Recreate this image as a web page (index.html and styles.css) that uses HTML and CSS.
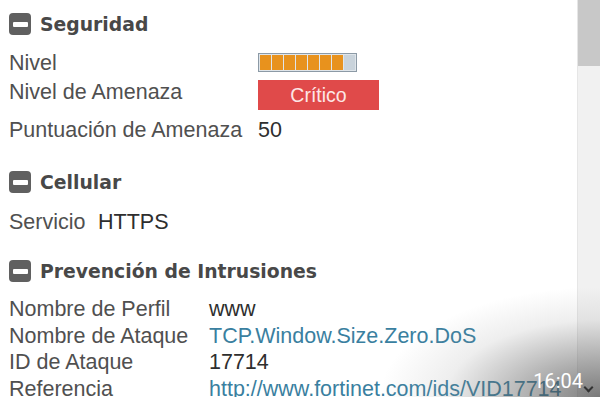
FILE: index.html
```html
<!DOCTYPE html>
<html lang="es">
<head>
<meta charset="utf-8">
<title>Detalles</title>
<link rel="stylesheet" href="styles.css">
</head>
<body>
<div class="frame">
  <main class="content">
    <section class="sec sec-seg">
      <h2 class="head"><span class="icon"></span>Seguridad</h2>
      <div class="kv kv-seg">
        <div class="lbl r1">Nivel</div>
        <div class="val r1"><div class="bar"><i class="on"></i><i class="on"></i><i class="on"></i><i class="on"></i><i class="on"></i><i class="on"></i><i class="on"></i><i></i></div></div>
        <div class="lbl r2">Nivel de Amenaza</div>
        <div class="val r2"><span class="badge">Crítico</span></div>
        <div class="lbl r3">Puntuación de Amenaza</div>
        <div class="val r3">50</div>
      </div>
    </section>
    <section class="sec sec-cell">
      <h2 class="head"><span class="icon"></span>Cellular</h2>
      <div class="kv kv-cell">
        <div class="lbl">Servicio</div>
        <div class="val">HTTPS</div>
      </div>
    </section>
    <section class="sec sec-ips">
      <h2 class="head"><span class="icon"></span>Prevención de Intrusiones</h2>
      <div class="kv kv-ips">
        <div class="lbl">Nombre de Perfil</div>
        <div class="val">www</div>
        <div class="lbl">Nombre de Ataque</div>
        <div class="val"><a class="link" href="#">TCP.Window.Size.Zero.DoS</a></div>
        <div class="lbl">ID de Ataque</div>
        <div class="val">17714</div>
        <div class="lbl">Referencia</div>
        <div class="val"><a class="link" href="#">http://www.fortinet.com/ids/VID17714</a></div>
      </div>
    </section>
  </main>
  <div class="scrollbar"><div class="thumb"></div></div>
  <div class="overlay">
    <span class="time">16:04</span>
    <span class="chev"></span>
  </div>
</div>
</body>
</html>
```

FILE: styles.css
```css
html, body {
  margin: 0;
  padding: 0;
  background: #ffffff;
}
.frame {
  position: relative;
  width: 600px;
  height: 397px;
  overflow: hidden;
  display: flex;
}
.content {
  flex: 1;
  min-width: 0;
  padding: 13px 0 0 9px;
  font-family: "Liberation Sans", Arial, sans-serif;
  font-size: 21.5px;
  color: #505050;
  white-space: nowrap;
}
.head {
  display: flex;
  align-items: center;
  gap: 9px;
  height: 22px;
  margin: 0;
  font-family: "DejaVu Sans", Verdana, sans-serif;
  font-weight: bold;
  font-size: 18.8px;
  color: #484848;
}
.icon {
  flex: none;
  width: 22px;
  height: 22px;
  border-radius: 4px;
  background: #606060;
  display: flex;
  align-items: center;
  justify-content: center;
}
.icon::before {
  content: "";
  width: 15px;
  height: 5px;
  background: #ffffff;
  border-radius: 1px;
}
.kv {
  display: grid;
  align-items: start;
}
.kv-seg {
  grid-template-columns: 249px 1fr;
  margin-top: 16px;
  line-height: 24px;
}
.kv-seg .r1 { height: 29px; }
.kv-seg .r2 { height: 30px; }
.kv-seg .r3 { margin-top: 8px; }
.bar {
  width: 95px;
  height: 15px;
  margin-top: 2px;
  border: 1px solid #8c9aa6;
  padding: 1px;
  box-sizing: content-box;
  display: flex;
  gap: 1px;
  background: #dfe5ea;
}
.bar i {
  flex: 1;
  background: #c9d3db;
}
.bar i.on {
  background: #e8921d;
}
.badge {
  display: flex;
  align-items: center;
  justify-content: center;
  width: 121px;
  height: 30px;
  background: #e04a4a;
  color: #fde6e6;
  font-size: 19.5px;
}
.sec-cell { margin-top: 29px; }
.kv-cell {
  grid-template-columns: 89px 1fr;
  margin-top: 17px;
  line-height: 24px;
}
.sec-ips { margin-top: 26px; }
.kv-ips {
  grid-template-columns: 200px 1fr;
  margin-top: 14px;
  line-height: 26.7px;
}
.val { color: #2e2e2e; }
.link {
  color: #3a7fa0;
  text-decoration: none;
}
.scrollbar {
  width: 22px;
  flex: none;
  background: #f1f1f1;
  border-left: 1px solid #e6e6e6;
}
.thumb {
  height: 66px;
  background: #c8c8c8;
}
.overlay {
  position: absolute;
  right: 0;
  bottom: 0;
  width: 220px;
  height: 110px;
  background: radial-gradient(ellipse 100% 100% at 100% 100%, rgba(70,70,70,0.7) 0%, rgba(90,90,90,0.45) 35%, rgba(140,140,140,0.15) 70%, rgba(255,255,255,0) 100%);
  pointer-events: none;
}
.time {
  position: absolute;
  right: 17px;
  bottom: 4px;
  font-family: "Roboto", "Liberation Sans", sans-serif;
  font-size: 20px;
  color: #ffffff;
}
.chev {
  position: absolute;
  right: 8px;
  bottom: 6px;
  width: 5px;
  height: 5px;
  border-right: 2px solid #333;
  border-bottom: 2px solid #333;
  transform: rotate(45deg);
}
```
